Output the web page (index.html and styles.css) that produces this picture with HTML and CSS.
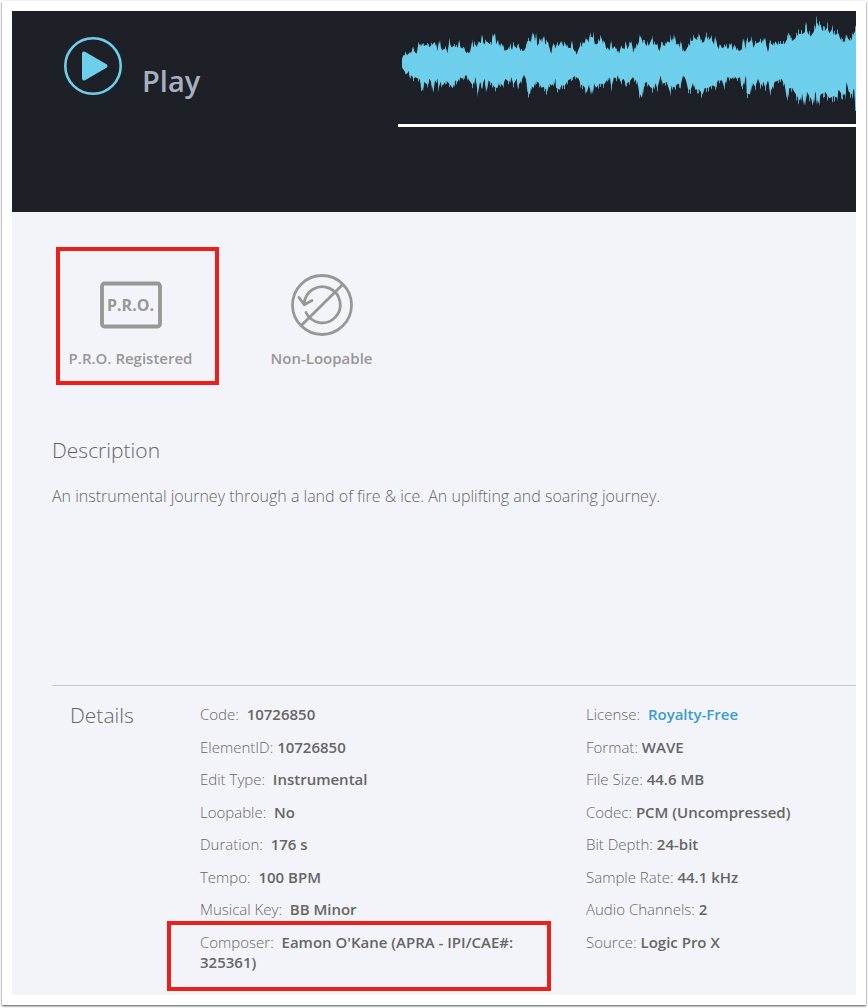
FILE: index.html
```
<!DOCTYPE html>
<html lang="en">
<head>
    <meta charset="UTF-8">
    <meta name="viewport" content="width=device-width, initial-scale=1.0">
    <title>Track Details</title>
    <link rel="stylesheet" href="styles.css">
</head>
<body>
    <div class="frame">
        <header class="player">
            <button type="button" class="play-button">
                <svg class="play-icon" viewBox="0 0 58 58" aria-hidden="true">
                    <circle cx="29" cy="29" r="27.7" fill="none" stroke="#6dcfec" stroke-width="2.6"/>
                    <path d="M20 16.500v25L41.500 29z" fill="#6dcfec" stroke="#6dcfec" stroke-width="4" stroke-linejoin="round"/>
                </svg>
                <span class="play-label">Play</span>
            </button>
            <div class="waveform">
                <svg class="wave" viewBox="36 33 1362 300" preserveAspectRatio="xMinYMid slice" role="img" aria-label="Waveform">
                    <defs>
                        <g id="wave-shape">
                            <path id="wave-top" d="M36 190L36 180 40 165 44 165 46 157 52 165 54 160 62 160 66 150 68 138 72 152 80 160 84 135 88 128 92 140 96 126 100 135 110 132 118 138 126 132 134 122 138 135 142 150 150 117 154 150 166 142 172 158 178 120 184 140 190 135 204 140 206 120 212 140 222 145 230 158 240 155 246 122 250 140 254 128 262 140 266 120 272 126 276 110 282 130 290 120 298 128 304 132 308 108 314 95 318 130 324 115 328 138 332 140 334 125 344 150 358 145 360 132 366 148 370 130 380 142 386 135 392 150 402 150 410 135 412 120 420 118 424 125 428 92 432 100 436 125 438 103 442 135 446 128 454 110 456 125 460 103 466 130 474 120 478 145 484 160 488 132 496 142 500 130 506 135 514 118 518 138 526 128 532 140 542 142 546 126 550 145 560 162 566 145 572 130 576 138 580 125 586 125 590 110 596 122 602 105 608 108 610 103 614 128 620 130 628 120 634 108 640 130 644 120 648 142 656 150 660 145 662 122 668 145 674 135 680 150 688 158 692 140 704 145 706 128 712 145 718 132
                            724 120 730 155 738 138 744 130 752 102 758 125 764 125 770 135 774 128 776 135 786 110 790 130 800 130 808 152 814 130 826 135 832 120 840 125 842 110 848 125 852 98 858 130 866 128 868 145 874 122 878 152 886 152 892 140 900 130 902 118 908 118 912 108 924 118 928 98 934 125 942 122 948 102 956 118 962 108 972 130 974 110 980 130 986 145 992 130 996 142 1008 135 1014 145 1024 125 1028 148 1036 135 1040 148 1050 150 1056 145 1060 110 1066 145 1070 115 1076 125 1084 115 1090 140 1096 128 1104 125 1110 120 1118 128 1122 108 1128 128 1134 155 1140 125 1152 135 1156 120 1162 130 1174 128 1184 128 1188 120 1200 98 1204 120 1212 115 1220 105 1226 95 1236 98 1244 92 1248 75 1254 95 1262 105 1270 92 1276 80 1280 58 1288 75 1292 65 1296 85 1304 88 1312 75 1318 95 1326 82 1332 100 1346 95 1350 110 1356 122 1366 120 1370 98 1374 112 1382 120 1388 105 1394 90 1398 85V190z"/>
                            <path id="wave-bottom" d="M36 188L36 200 40 210 50 225 56 215 60 232 66 230 70 240 76 235 86 240 92 245 94 280 98 275 102 250 112 258 118 240 124 250 130 285 134 250 142 240 146 268 152 250 158 262 168 245 178 255 188 270 196 245 202 250 210 235 216 240 228 228 238 245 248 260 252 250 256 235 264 285 270 250 276 262 284 240 290 282 296 245 306 255 312 265 322 270 328 250 338 262 346 240 352 245 358 250 364 235 370 258 380 240 384 262 394 245 402 228 410 245 412 280 420 290 424 260 430 270 438 245 448 255 454 268 462 265 472 280 478 255 486 262 496 240 498 268 510 275 514 260 524 262 534 245 542 240 554 232 566 240 572 258 580 262 586 270 590 285 598 255 606 290 612 255 618 268 630 255 642 258 656 235 660 240 664 268 672 235 680 240 684 228 692 250 700 240 708 255 718 250
                            728 235 742 250 748 285 756 300 762 255 770 250 780 265 788 272 796 255 802 270 812 230 820 255 830 250 840 282 846 260 852 268 864 255 872 260 880 225 888 245 894 272 902 275 910 250 916 275 926 272 938 290 944 270 956 268 966 260 976 265 984 245 996 245 1002 265 1012 235 1026 240 1032 230 1040 240 1050 235 1054 265 1060 258 1068 230 1070 285 1080 290 1086 250 1096 265 1104 240 1112 262 1120 250 1126 268 1134 245 1142 280 1154 250 1164 245 1174 240 1184 258 1190 300 1198 270 1206 268 1218 290 1230 310 1236 285 1242 325 1250 280 1264 305 1268 325 1276 280 1284 320 1292 290 1306 282 1318 302 1332 295 1340 300 1346 275 1356 290 1366 290 1370 250 1376 280 1386 290 1392 270 1396 330 1398 330V188z"/>
                        </g>
                        <clipPath id="spikes" transform="translate(0 -15) scale(1 1.080)">
                            <use href="#wave-top"/>
                            <use href="#wave-bottom"/>
                        </clipPath>
                    </defs>
                    <use href="#wave-shape" fill="#6dcfec" transform="translate(0 11) scale(1 .940)"/>
                    <path d="M36 189H1398" stroke="#6dcfec" stroke-width="300" stroke-dasharray="3 6 3 9 6 6 3 12 3 3" opacity=".8" clip-path="url(#spikes)"/>
                </svg>
                <div class="progress"></div>
            </div>
        </header>

        <main class="content">
            <ul class="badges">
                <li class="badge highlighted">
                    <svg class="badge-icon" viewBox="0 0 62 62" aria-hidden="true">
                        <rect x="2" y="9.500" width="58" height="43" rx="2.500" fill="none" stroke="#979797" stroke-width="3.800"/>
                        <text class="pro-text" x="30.500" y="37" text-anchor="middle">P.R.O.</text>
                    </svg>
                    <span class="badge-label">P.R.O. Registered</span>
                </li>
                <li class="badge">
                    <svg class="badge-icon" viewBox="0 0 62 62" fill="none" stroke="#979797" stroke-width="2.800" aria-hidden="true">
                        <circle cx="31" cy="31" r="29.500"/>
                        <path d="M10.300 51.500L51.700 10.500"/>
                        <path stroke-linecap="round" d="M13.300 29.500A18 18 0 1 1 15 38.500M8 23.500L13.300 30.700 21 26.500"/>
                    </svg>
                    <span class="badge-label">Non-Loopable</span>
                </li>
            </ul>

            <section class="description">
                <h2>Description</h2>
                <p>An instrumental journey through a land of fire &amp; ice. An uplifting and soaring journey.</p>
            </section>

            <section class="details">
                <h2>Details</h2>
                <ul class="detail-list">
                    <li>Code:&nbsp; <strong>10726850</strong></li>
                    <li>ElementID: <strong>10726850</strong></li>
                    <li>Edit Type:&nbsp; <strong>Instrumental</strong></li>
                    <li>Loopable:&nbsp; <strong>No</strong></li>
                    <li>Duration:&nbsp; <strong>176 s</strong></li>
                    <li>Tempo:&nbsp; <strong>100 BPM</strong></li>
                    <li>Musical Key:&nbsp; <strong>BB Minor</strong></li>
                    <li class="composer">Composer:&nbsp; <strong>Eamon O'Kane (APRA - IPI/CAE#: 325361)</strong></li>
                </ul>
                <ul class="detail-list file-list">
                    <li>License:&nbsp; <a href="#">Royalty-Free</a></li>
                    <li>Format: <strong>WAVE</strong></li>
                    <li>File Size: <strong>44.6 MB</strong></li>
                    <li>Codec: <strong>PCM (Uncompressed)</strong></li>
                    <li>Bit Depth: <strong>24-bit</strong></li>
                    <li>Sample Rate: <strong>44.1 kHz</strong></li>
                    <li>Audio Channels: <strong>2</strong></li>
                    <li>Source: <strong>Logic Pro X</strong></li>
                </ul>
            </section>
        </main>
    </div>
</body>
</html>
```
FILE: styles.css
```
* {
    box-sizing: border-box;
}

body {
    font-family: "Open Sans", Arial, sans-serif;
    font-size: 15px;
    font-weight: 340;
    line-height: 20px;
    color: #666;
    background-color: #fff;
    margin: 0;
    padding: 1px 2px 3px;
    min-height: 100vh;
    display: flex;
}

ul {
    list-style: none;
    margin: 0;
    padding: 0;
}

h2 {
    font-size: 21px;
    font-weight: 340;
    line-height: 30px;
    margin: 0;
}

strong {
    font-weight: 650;
}

.frame {
    flex: 1;
    min-width: 0;
    display: flex;
    flex-direction: column;
    padding: 10px;
    background-color: #fff;
    box-shadow: 0 1px 2px rgba(0, 0, 0, 0.7);
}

/* Player */
.player {
    display: flex;
    height: 201px;
    background-color: #1d2027;
}

.play-button {
    flex: 0 0 386px;
    display: flex;
    align-items: flex-start;
    gap: 20px;
    padding: 26px 0 0 52px;
    background: none;
    border: none;
    color: #a9afbf;
    font-family: inherit;
    cursor: pointer;
}

.play-icon {
    width: 58px;
    height: 58px;
}

.play-label {
    margin-top: 24px;
    font-size: 29px;
    font-weight: 650;
    line-height: 40px;
}

.waveform {
    flex: 1;
    min-width: 0;
}

.wave {
    display: block;
    width: calc(100% - 4px);
    height: 100px;
    margin-left: 4px;
}

.progress {
    height: 3px;
    margin-top: 13px;
    background-color: #fff;
}

/* Content */
.content {
    flex: 1;
    display: flex;
    flex-direction: column;
    padding: 35px 0 3px 40px;
    background-color: #f3f4f9;
}

.badges {
    display: flex;
    gap: 21px;
    padding-left: 4px;
}

.badge {
    width: 163px;
    height: 138px;
    display: flex;
    flex-direction: column;
    align-items: center;
    gap: 12px;
    padding: 27px 0 0;
}

.highlighted {
    border: 4px solid #ed1f1a;
    padding: 23px 14px 0 0;
}

.badge-icon {
    width: 62px;
    height: 62px;
}

.badge-label {
    font-weight: 650;
    color: #979797;
    white-space: nowrap;
}

.pro-text {
    font-size: 16px;
    font-weight: 700;
    fill: #979797;
}

.description {
    margin-top: 50px;
}

.description p {
    margin: 20px 0 0;
    font-size: 16px;
    line-height: 22px;
}

/* Details */
.details {
    flex: 1;
    display: flex;
    margin-top: 178px;
    padding: 18px 0 20px;
    border-top: 1px solid #c8cacb;
}

.details h2 {
    flex: 0 0 148px;
    padding-left: 18px;
    line-height: 22px;
}

.detail-list {
    flex: 0 0 386px;
    display: flex;
    flex-direction: column;
    justify-content: space-between;
    padding-right: 35px;
}

.file-list {
    flex: 1;
    padding: 0 0 20px;
}

.detail-list a {
    font-weight: 650;
    color: #3c9dcb;
    text-decoration: none;
}

.composer {
    position: relative;
}

/* Red outline around the composer row */
.composer::after {
    content: "";
    position: absolute;
    inset: -11px 0 -19px -33px;
    border: 4px solid #ed1f1a;
}
```
